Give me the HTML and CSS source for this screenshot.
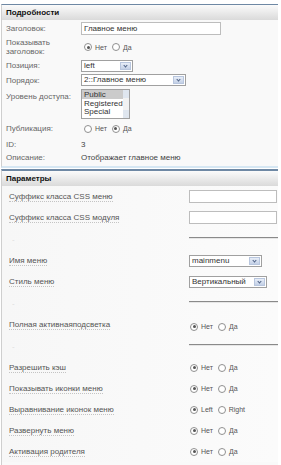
FILE: index.html
```
<!DOCTYPE html>
<html lang="ru">
<head>
  <meta charset="UTF-8">
  <meta name="viewport" content="width=device-width, initial-scale=1.0">
  <title>Модуль меню</title>
  <link rel="stylesheet" href="styles.css">
</head>
<body>
  <div class="panel details">
    <div class="head">Подробности</div>
    <div class="row r-title">
      <span class="label">Заголовок:</span>
      <span class="input wide">Главное меню</span>
    </div>
    <div class="row r-show">
      <span class="label">Показывать<br>заголовок:</span>
      <span class="radios">
        <span class="radio on"></span><span class="opt">Нет</span>
        <span class="radio"></span><span class="opt">Да</span>
      </span>
    </div>
    <div class="row r-pos">
      <span class="label">Позиция:</span>
      <span class="select" style="width: 50px"><span class="val">left</span><span class="arrow"></span></span>
    </div>
    <div class="row r-order">
      <span class="label">Порядок:</span>
      <span class="select" style="width: 103px"><span class="val">2::Главное меню</span><span class="arrow"></span></span>
    </div>
    <div class="row r-access">
      <span class="label">Уровень доступа:</span>
      <span class="listbox">
        <span class="items">
          <span class="item sel">Public</span>
          <span class="item">Registered</span>
          <span class="item">Special</span>
        </span>
        <span class="scroll"><span class="up"></span><span class="down"></span></span>
      </span>
    </div>
    <div class="row r-pub">
      <span class="label">Публикация:</span>
      <span class="radios">
        <span class="radio"></span><span class="opt">Нет</span>
        <span class="radio on"></span><span class="opt">Да</span>
      </span>
    </div>
    <div class="row r-id">
      <span class="label">ID:</span>
      <span class="text">3</span>
    </div>
    <div class="row r-desc">
      <span class="label">Описание:</span>
      <span class="text">Отображает главное меню</span>
    </div>
  </div>

  <div class="panel params">
    <div class="head">Параметры</div>
    <div class="prow">
      <span class="plabel">Суффикс класса CSS меню</span>
      <span class="input"></span>
    </div>
    <div class="prow">
      <span class="plabel">Суффикс класса CSS модуля</span>
      <span class="input"></span>
    </div>
    <div class="prow spacer">
      <span class="dash">-</span>
      <span class="rule"></span>
    </div>
    <div class="prow">
      <span class="plabel">Имя меню</span>
      <span class="select" style="width: 71px"><span class="val">mainmenu</span><span class="arrow"></span></span>
    </div>
    <div class="prow">
      <span class="plabel">Стиль меню</span>
      <span class="select" style="width: 76px"><span class="val">Вертикальный</span><span class="arrow"></span></span>
    </div>
    <div class="prow spacer">
      <span class="dash">-</span>
      <span class="rule"></span>
    </div>
    <div class="prow">
      <span class="plabel">Полная активнаяподсветка</span>
      <span class="radios low">
        <span class="radio on"></span><span class="opt">Нет</span>
        <span class="radio"></span><span class="opt">Да</span>
      </span>
    </div>
    <div class="prow spacer">
      <span class="dash">-</span>
      <span class="rule"></span>
    </div>
    <div class="prow">
      <span class="plabel">Разрешить кэш</span>
      <span class="radios">
        <span class="radio on"></span><span class="opt">Нет</span>
        <span class="radio"></span><span class="opt">Да</span>
      </span>
    </div>
    <div class="prow">
      <span class="plabel">Показывать иконки меню</span>
      <span class="radios">
        <span class="radio on"></span><span class="opt">Нет</span>
        <span class="radio"></span><span class="opt">Да</span>
      </span>
    </div>
    <div class="prow">
      <span class="plabel">Выравнивание иконок меню</span>
      <span class="radios">
        <span class="radio on"></span><span class="opt">Left</span>
        <span class="radio"></span><span class="opt">Right</span>
      </span>
    </div>
    <div class="prow">
      <span class="plabel">Развернуть меню</span>
      <span class="radios">
        <span class="radio on"></span><span class="opt">Нет</span>
        <span class="radio"></span><span class="opt">Да</span>
      </span>
    </div>
    <div class="prow">
      <span class="plabel">Активация родителя</span>
      <span class="radios">
        <span class="radio on"></span><span class="opt">Нет</span>
        <span class="radio"></span><span class="opt">Да</span>
      </span>
    </div>
  </div>
</body>
</html>
```

FILE: styles.css
```
body {
  margin: 0;
  padding-top: 4px;
  font-family: 'Liberation Sans', Arial, sans-serif;
  font-size: 8px;
  color: #666;
  background: #fff;
  overflow: hidden;
}
.panel {
  width: 276px;
  margin-left: 1px;
  border-left: 1px solid #cfcfcf;
  border-top: 1px solid #6e88a4;
  background-color: #f9f9f9;
}
.head {
  height: 15px;
  line-height: 15px;
  padding-left: 4px;
  font-weight: bold;
  color: #111;
  background: linear-gradient(to bottom, #fbfbfb, #dadada);
}

/* подробности */
.details {
  padding-bottom: 2px;
  border-bottom: 2px solid #d6e7f3;
}
.row {
  display: grid;
  grid-template-columns: 75px 1fr;
  align-items: center;
  padding-left: 4px;
}
.r-title { height: 16px; }
.r-show { height: 22px; }
.r-pos { height: 15px; }
.r-order { height: 14px; }
.r-access { height: 33px; align-items: start; }
.r-pub { height: 17px; }
.r-id { height: 14px; }
.r-desc { height: 13px; }
.label {
  line-height: 9px;
}
.r-access .label { padding-top: 5px; }
.text { color: #444; }

.input {
  display: block;
  height: 11px;
  width: 84px;
  border: 1px solid #bdbdbd;
  background: #fff;
  line-height: 11px;
  padding-left: 2px;
  color: #333;
  box-sizing: content-box;
}
.input.wide { width: 136px; }

.select {
  display: flex;
  height: 10px;
  border: 1px solid #a0a0a0;
  background: #fff;
  color: #333;
  line-height: 10px;
  box-sizing: content-box;
}
.select .val {
  flex: 1;
  padding-left: 2px;
  white-space: nowrap;
  overflow: hidden;
}
.select .arrow {
  position: relative;
  width: 11px;
  margin: 1px;
  background: linear-gradient(to bottom, #e8eef8, #c3d0e6);
  border: 1px solid #b8c6de;
  box-sizing: border-box;
}
.select .arrow::after {
  content: "";
  position: absolute;
  left: 3px;
  top: 1px;
  width: 2px;
  height: 2px;
  border-right: 1px solid #4d6185;
  border-bottom: 1px solid #4d6185;
  transform: rotate(45deg);
}

.listbox {
  display: flex;
  width: 47px;
  height: 28px;
  margin-top: 2px;
  border: 1px solid #a0a0a0;
  background: #fff;
  color: #333;
}
.listbox .items {
  flex: 1;
  display: flex;
  flex-direction: column;
}
.listbox .item {
  height: 8.7px;
  line-height: 9px;
  padding-left: 2px;
}
.listbox .item.sel { background: #cbcbcb; }
.listbox .scroll {
  width: 8px;
  display: flex;
  flex-direction: column;
  justify-content: space-between;
  background: #f2f2f2;
}
.listbox .up, .listbox .down {
  height: 8px;
  background: #dfe6ef;
}

.radios {
  display: flex;
  align-items: center;
  padding-left: 3px;
  color: #555;
}
.radio {
  width: 6px;
  height: 6px;
  border: 1px solid #909090;
  border-radius: 50%;
  background: #fff;
  position: relative;
}
.radio.on::after {
  content: "";
  position: absolute;
  left: 1.5px;
  top: 1.5px;
  width: 3px;
  height: 3px;
  border-radius: 50%;
  background: #555;
}
.opt {
  margin: 0 5px 0 3px;
  font-size: 7px;
}

/* параметры */
.params {
  margin-top: 1px;
  border-top-width: 2px;
  padding-bottom: 10px;
}
.prow {
  display: grid;
  grid-template-columns: 180px 1fr;
  align-items: center;
  height: 21px;
  padding-left: 7px;
  background: linear-gradient(to right, #f7f7f7, #fbfbfb);
}
.prow.spacer { height: 22px; }
.plabel {
  justify-self: start;
  color: #555;
  border-bottom: 1px dotted #c4c4c4;
  line-height: 9px;
}
.prow .radios { padding-left: 1px; }
.prow .radios.low { margin-top: 4px; }
.dash {
  color: #ddd;
  padding-left: 3px;
}
.rule {
  display: block;
  height: 1px;
  margin-top: -2px;
  background: #8a8a8a;
  border-bottom: 1px solid #e6e6e6;
}
```
